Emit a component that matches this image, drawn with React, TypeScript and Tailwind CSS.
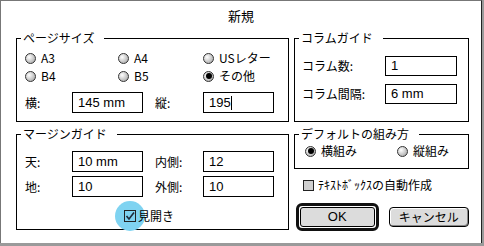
import React from "react";

const jp = "font-['Noto_Sans_CJK_JP',sans-serif]";
const latin = "font-['Liberation_Sans','Noto_Sans_CJK_JP',sans-serif]";

const Radio = ({ checked = false }: { checked?: boolean }) => (
  <span className="w-[11px] h-[11px] shrink-0 rounded-full border border-[#333] bg-[radial-gradient(circle_at_35%_35%,#ffffff,#9a9a9a)] flex items-center justify-center">
    {checked && <span className="w-[6px] h-[6px] rounded-full bg-black" />}
  </span>
);

const RadioItem = ({ label, checked, w }: { label: string; checked?: boolean; w: string }) => (
  <div className={`flex items-center gap-[5px] h-[16px] ${w}`}>
    <Radio checked={checked} />
    <span className={`${jp} text-[12px] leading-[16px] text-black`}>{label}</span>
  </div>
);

const Field = ({ value, caret = false, w = "w-[71px]", h = "h-[21px]" }: { value: string; caret?: boolean; w?: string; h?: string }) => (
  <div className={`${w} ${h} border border-black bg-white flex items-center pl-[5px]`}>
    <span className={`${latin} text-[13px] leading-[16px] text-black`}>{value}</span>
    {caret && <span className="w-px h-[14px] bg-black" />}
  </div>
);

const Group = ({ title, className, children }: { title: string; className: string; children: React.ReactNode }) => (
  <div className={`relative border border-black ${className}`}>
    <span className={`absolute -top-[9px] left-[4px] bg-white pl-[2px] pr-[10px] ${jp} text-[12px] leading-[16px] text-black`}>
      {title}
    </span>
    {children}
  </div>
);

const Label = ({ text, w }: { text: string; w: string }) => (
  <span className={`${jp} text-[12px] leading-[16px] text-black ${w}`}>{text}</span>
);

export default function App() {
  return (
    <div className="w-[484px] h-[246px] bg-[#9a9a9a]">
      <div className="w-[482px] h-[243px] bg-white border-l border-t border-[#777] border-r border-r-[#222] flex flex-col">
        {/* Title */}
        <div className={`h-[37px] pt-[7px] text-center ${jp} text-[13px] leading-[16px] text-black`}>新規</div>

        <div className="grid grid-cols-[273px_175px] gap-x-[5px] gap-y-[12px] pl-[15px]">
          {/* Page size */}
          <Group title="ページサイズ" className="h-[84px] pt-[11px] pl-[8px]">
            <div className="flex">
              <RadioItem label="A3" w="w-[93px]" />
              <RadioItem label="A4" w="w-[85px]" />
              <RadioItem label="USレター" w="w-[80px]" />
            </div>
            <div className="flex mt-[2px]">
              <RadioItem label="B4" w="w-[93px]" />
              <RadioItem label="B5" w="w-[85px]" />
              <RadioItem label="その他" checked w="w-[80px]" />
            </div>
            <div className="flex items-center mt-[8px]">
              <Label text="横:" w="w-[47px]" />
              <Field value="145 mm" />
              <span className="w-[12px]" />
              <Label text="縦:" w="w-[48px]" />
              <Field value="195" caret />
            </div>
          </Group>

          {/* Column guide */}
          <Group title="コラムガイド" className="h-[84px] pt-[17px] pl-[7px]">
            <div className="flex items-center">
              <Label text="コラム数:" w="w-[83px]" />
              <Field value="1" w="w-[72px]" h="h-[20px]" />
            </div>
            <div className="flex items-center mt-[8px]">
              <Label text="コラム間隔:" w="w-[83px]" />
              <Field value="6 mm" w="w-[72px]" h="h-[20px]" />
            </div>
          </Group>

          {/* Margin guide */}
          <Group title="マージンガイド" className="h-[96px] pt-[16px] pl-[8px]">
            <div className="flex items-center">
              <Label text="天:" w="w-[47px]" />
              <Field value="10 mm" />
              <span className="w-[12px]" />
              <Label text="内側:" w="w-[48px]" />
              <Field value="12" />
            </div>
            <div className="flex items-center mt-[4px]">
              <Label text="地:" w="w-[47px]" />
              <Field value="10" />
              <span className="w-[12px]" />
              <Label text="外側:" w="w-[48px]" />
              <Field value="10" />
            </div>
            <div className="flex items-center mt-[11px] pl-[99px] h-[16px]">
              <div className="relative w-[12px] h-[12px] flex items-center justify-center">
                <span className="absolute -left-[9px] -top-[9px] w-[30px] h-[30px] rounded-full bg-[#7fd3f1]" />
                <span className="relative w-[12px] h-[12px] border border-[#222] flex items-center justify-center">
                  <svg width="10" height="10" viewBox="0 0 10 10">
                    <path d="M1.5 5 L4 8 L9 1.5" fill="none" stroke="#1d2a3a" strokeWidth="1.6" />
                  </svg>
                </span>
              </div>
              <span className={`relative ml-[2px] ${jp} text-[12px] leading-[16px] text-black`}>見開き</span>
            </div>
          </Group>

          {/* Right bottom column */}
          <div className="flex flex-col">
            <Group title="デフォルトの組み方" className="h-[35px] pt-[8px] pl-[10px]">
              <div className="flex">
                <RadioItem label="横組み" checked w="w-[92px]" />
                <RadioItem label="縦組み" w="w-[70px]" />
              </div>
            </Group>

            <div className="flex items-center gap-[4px] mt-[8px] ml-[9px] h-[16px]">
              <span className="w-[11px] h-[11px] border border-[#222] bg-[#cfcfcf]" />
              <span className={`${jp} text-[12px] leading-[16px] text-black`}>ﾃｷｽﾄﾎﾞｯｸｽの自動作成</span>
            </div>

            <div className="flex items-center mt-[10px] ml-[2px]">
              <div className="w-[84px] h-[28px] rounded-[6px] border-[3px] border-[#111] p-[1px] bg-white">
                <div className={`w-full h-full rounded-[3px] border border-black bg-[#dcdcdc] flex items-center justify-center ${latin} text-[13px] text-black`}>
                  OK
                </div>
              </div>
              <div className={`ml-[10px] w-[82px] h-[20px] rounded-[4px] border border-black bg-[#dcdcdc] shadow-[inset_-1px_-1px_0_#888,inset_1px_1px_0_#fff] flex items-center justify-center ${jp} text-[12px] leading-[16px] text-black`}>
                キャンセル
              </div>
            </div>
          </div>
        </div>
      </div>
    </div>
  );
}
